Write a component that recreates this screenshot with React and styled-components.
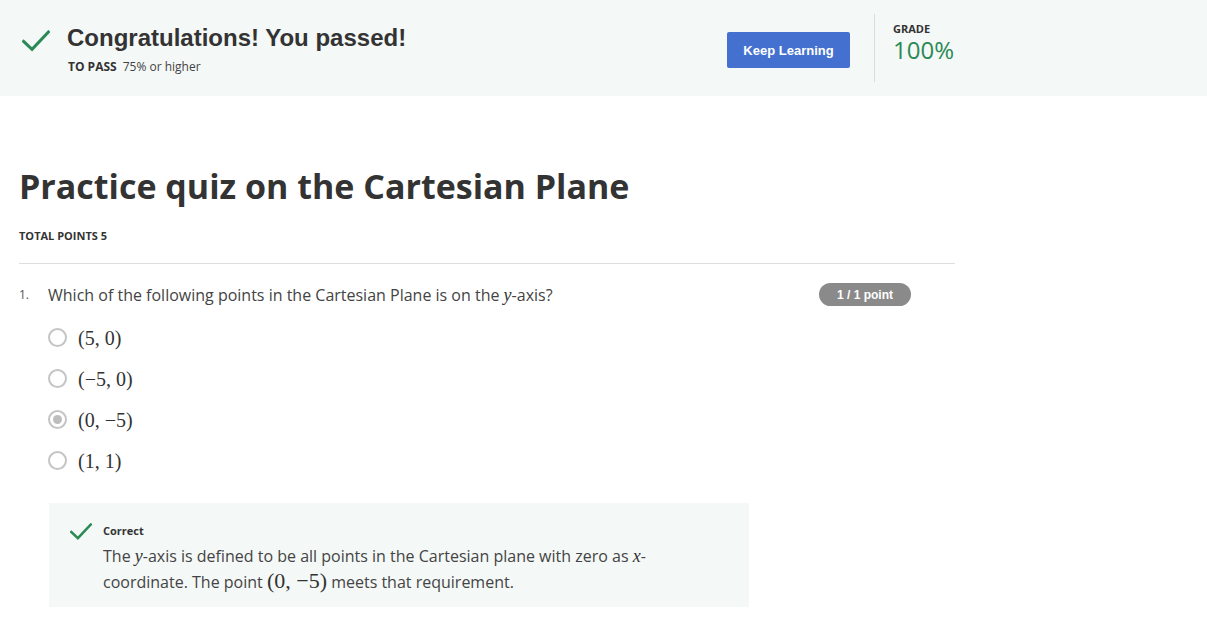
import styled, { createGlobalStyle } from "styled-components"

const GlobalStyle = createGlobalStyle`
  body {
    margin: 0;
    background: #fff;
    font-family: "Open Sans", "Liberation Sans", sans-serif;
    color: #333;
  }
`

const Banner = styled.div`
  height: 96px;
  background-color: #f4f8f7;
  display: flex;
  align-items: center;
  padding-left: 22px;
  box-sizing: border-box;
`

const BannerMain = styled.div`
  width: 705px;
  display: flex;
  align-items: flex-start;
  align-self: flex-start;
  padding-top: 23px;
`

const BannerText = styled.div`
  margin-left: 17px;
  display: flex;
  flex-direction: column;
`

const BannerTitle = styled.h2`
  margin: 0;
  font-family: "Liberation Sans", Arial, sans-serif;
  font-weight: bold;
  font-size: 24px;
  line-height: 30px;
  color: #333;
`

const PassLine = styled.div`
  margin-top: 5px;
  margin-left: 1px;
  font-size: 12px;
  color: #444;
  span {
    font-weight: 700;
    margin-right: 6px;
    color: #333;
  }
`

const KeepButton = styled.button`
  width: 123px;
  height: 36px;
  border: none;
  border-radius: 2px;
  background-color: #4471cf;
  color: #fff;
  font-family: "Liberation Sans", Arial, sans-serif;
  font-weight: bold;
  font-size: 13px;
  cursor: pointer;
  margin-top: 4px;
`

const Divider = styled.div`
  width: 1px;
  height: 68px;
  background-color: #dcdcdc;
  margin-left: 24px;
`

const Grade = styled.div`
  margin-left: 18px;
  display: flex;
  flex-direction: column;
  margin-top: -10px;
`

const GradeLabel = styled.div`
  font-size: 11px;
  font-weight: 700;
  color: #333;
  line-height: 14px;
`

const GradeValue = styled.div`
  font-size: 24px;
  color: #2a8a55;
  line-height: 28px;
`

const Content = styled.main`
  padding: 70px 0 0 19px;
  width: 936px;
`

const QuizTitle = styled.h1`
  margin: 0;
  font-size: 34px;
  line-height: 41px;
  font-weight: 700;
  color: #333;
`

const TotalPoints = styled.div`
  margin-top: 21px;
  font-size: 11px;
  font-weight: 700;
  line-height: 16px;
  color: #333;
`

const Rule = styled.hr`
  border: none;
  border-top: 1px solid #dedede;
  margin: 19px 0 0 0;
`

const QuestionRow = styled.div`
  margin-top: 19px;
  width: 892px;
  display: flex;
  align-items: center;
  height: 23px;
`

const Number = styled.span`
  width: 29px;
  font-size: 12px;
  color: #555;
`

const QuestionText = styled.span`
  flex: 1;
  font-size: 16px;
  color: #444;
`

const Badge = styled.span`
  width: 92px;
  height: 23px;
  border-radius: 12px;
  background-color: #8a8a8a;
  color: #fff;
  font-family: "Liberation Sans", Arial, sans-serif;
  font-weight: bold;
  font-size: 12px;
  display: flex;
  align-items: center;
  justify-content: center;
`

const Options = styled.div`
  margin-top: 11px;
  padding-left: 29px;
  display: flex;
  flex-direction: column;
`

const Option = styled.label`
  height: 41px;
  display: flex;
  align-items: center;
`

const Radio = styled.span`
  width: 19px;
  height: 19px;
  box-sizing: border-box;
  border-radius: 50%;
  border: 2px solid #c4c4c4;
  background: #fff;
  display: flex;
  align-items: center;
  justify-content: center;
  margin-right: 11px;
  &::after {
    content: "";
    display: ${p => (p.$checked ? "block" : "none")};
    width: 9px;
    height: 9px;
    border-radius: 50%;
    background: #bdbdbd;
  }
`

const Math = styled.span`
  font-family: "Liberation Serif", "Times New Roman", serif;
  font-size: ${p => p.$size || 20}px;
  line-height: 1;
  color: #333;
  white-space: nowrap;
  i {
    font-style: italic;
  }
`

const Feedback = styled.div`
  margin-top: 22px;
  margin-left: 30px;
  width: 700px;
  box-sizing: border-box;
  background-color: #f4f8f7;
  padding: 17px 48px 12px 21px;
  display: flex;
  align-items: flex-start;
`

const FeedbackBody = styled.div`
  margin-left: 11px;
`

const FeedbackTitle = styled.div`
  font-size: 11px;
  font-weight: 700;
  line-height: 22px;
  color: #333;
`

const FeedbackText = styled.p`
  margin: 1px 0 0 0;
  font-size: 16px;
  line-height: 26px;
  color: #444;
`

function CheckMark({ size = 28, stroke = 3 }) {
  return (
    <svg width={size} height={size * 0.78} viewBox="0 0 28 22" fill="none">
      <polyline
        points="1.5,11.5 10,19.5 26.5,2"
        stroke="#2a8a55"
        strokeWidth={stroke * (28 / size)}
        strokeLinecap="square"
      />
    </svg>
  )
}

const options = [
  { id: 1, label: "(5, 0)", checked: false },
  { id: 2, label: "(−5, 0)", checked: false },
  { id: 3, label: "(0, −5)", checked: true },
  { id: 4, label: "(1, 1)", checked: false },
]

function App() {
  return (
    <>
      <GlobalStyle />
      <Banner>
        <BannerMain>
          <span style={{ marginTop: 7 }}>
            <CheckMark size={28} stroke={3} />
          </span>
          <BannerText>
            <BannerTitle>Congratulations! You passed!</BannerTitle>
            <PassLine>
              <span>TO PASS</span>75% or higher
            </PassLine>
          </BannerText>
        </BannerMain>
        <KeepButton>Keep Learning</KeepButton>
        <Divider />
        <Grade>
          <GradeLabel>GRADE</GradeLabel>
          <GradeValue>100%</GradeValue>
        </Grade>
      </Banner>
      <Content>
        <QuizTitle>Practice quiz on the Cartesian Plane</QuizTitle>
        <TotalPoints>TOTAL POINTS 5</TotalPoints>
        <Rule />
        <QuestionRow>
          <Number>1.</Number>
          <QuestionText>
            Which of the following points in the Cartesian Plane is on the{" "}
            <Math $size={18}><i>y</i></Math>-axis?
          </QuestionText>
          <Badge>1 / 1 point</Badge>
        </QuestionRow>
        <Options>
          {options.map(o => (
            <Option key={o.id}>
              <Radio $checked={o.checked} />
              <Math>{o.label}</Math>
            </Option>
          ))}
        </Options>
        <Feedback>
          <span style={{ marginTop: 3 }}>
            <CheckMark size={22} stroke={2.5} />
          </span>
          <FeedbackBody>
            <FeedbackTitle>Correct</FeedbackTitle>
            <FeedbackText>
              The <Math $size={18}><i>y</i></Math>-axis is defined to be all points in the Cartesian plane with zero as{" "}
              <Math $size={18}><i>x</i></Math>-coordinate. The point <Math $size={22}>(0, −5)</Math> meets that requirement.
            </FeedbackText>
          </FeedbackBody>
        </Feedback>
      </Content>
    </>
  )
}

export default App
